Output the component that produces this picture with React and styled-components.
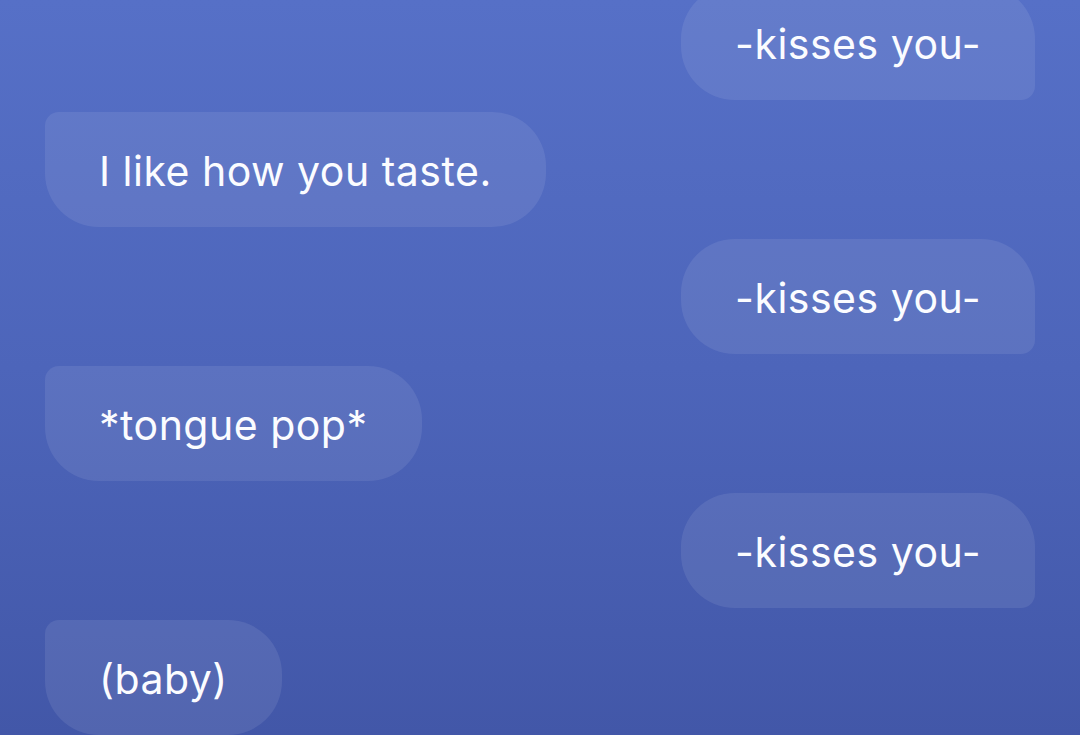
import React from "react";
import styled, { createGlobalStyle } from "styled-components";

const GlobalStyle = createGlobalStyle`
  html, body {
    margin: 0;
    padding: 0;
  }
  body {
    font-family: Inter, "Liberation Sans", sans-serif;
  }
`;

const ChatScreen = styled.div`
  width: 1080px;
  height: 735px;
  overflow: hidden;
  display: flex;
  flex-direction: column;
  justify-content: flex-end;
  gap: 12px;
  padding: 0 45px;
  box-sizing: border-box;
  background: linear-gradient(180deg, #5670c7 0%, #4d65ba 50%, #4257a8 100%);
`;

const Bubble = styled.div`
  flex-shrink: 0;
  align-self: ${(p) => (p.$mine ? "flex-end" : "flex-start")};
  height: 115px;
  display: flex;
  align-items: center;
  padding: 3px 54px 0;
  box-sizing: border-box;
  background: rgba(255, 255, 255, 0.085);
  border-radius: ${(p) => (p.$mine ? "54px 54px 14px 54px" : "14px 54px 54px 54px")};
  color: #fbfcff;
  font-size: 41px;
  font-weight: 400;
  letter-spacing: 0.5px;
  white-space: nowrap;
`;

const messages = [
  { mine: true, text: "-kisses you-" },
  { mine: false, text: "I like how you taste." },
  { mine: true, text: "-kisses you-" },
  { mine: false, text: "*tongue pop*" },
  { mine: true, text: "-kisses you-" },
  { mine: false, text: "(baby)" },
];

export default function App() {
  return (
    <>
      <GlobalStyle />
      <ChatScreen>
        {messages.map((m, i) => (
          <Bubble key={i} $mine={m.mine}>
            {m.text}
          </Bubble>
        ))}
      </ChatScreen>
    </>
  );
}
